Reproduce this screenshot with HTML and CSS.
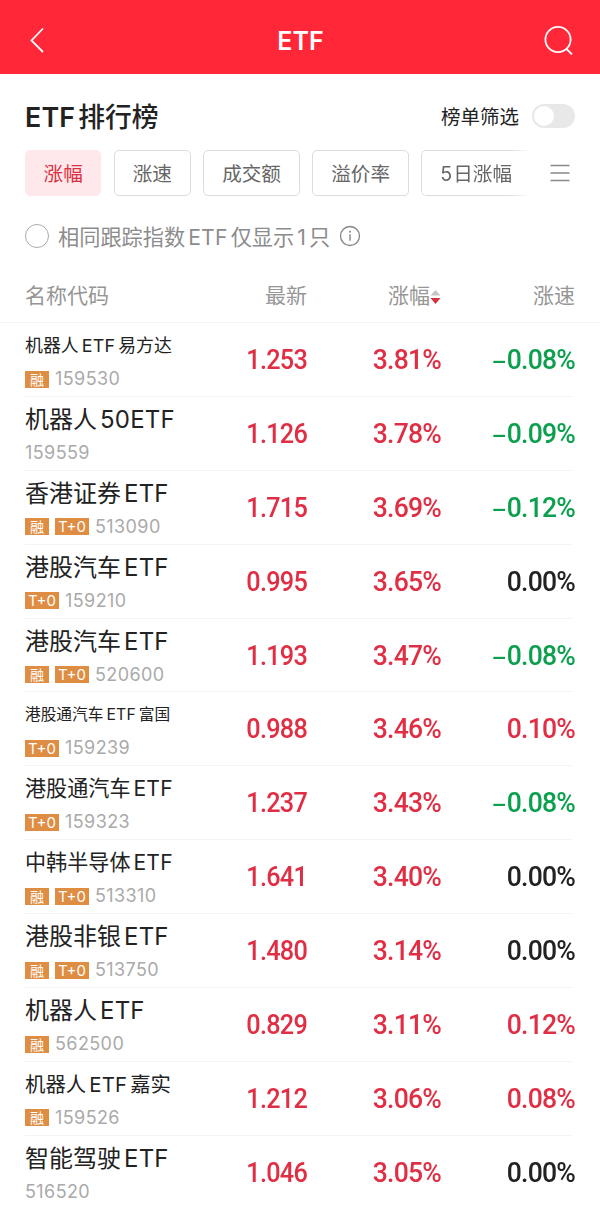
FILE: index.html
```html
<!DOCTYPE html>
<html lang="zh-CN">

<head>
    <meta charset="UTF-8">
    <meta name="viewport" content="width=device-width, initial-scale=1.0">
    <title>ETF排行榜</title>
    <link rel="stylesheet" href="styles.css">
</head>

<body>
    <header class="nav">
        <svg class="back" width="18" height="28" viewBox="0 0 18 28">
            <path d="M15 1.5L3.5 13.5L15 25" fill="none" stroke="#fff" stroke-width="1.8" />
        </svg>
        <h1>ETF</h1>
        <svg class="search" width="32" height="32" viewBox="0 0 32 32">
            <circle cx="15" cy="14.5" r="12.6" fill="none" stroke="#fff" stroke-width="1.8" />
            <path d="M23.5 24L29 29.3" fill="none" stroke="#fff" stroke-width="1.8" />
        </svg>
    </header>

    <div class="title">
        <h2><span class="en">ETF</span>排行榜</h2>
        <div class="filter">
            <span>榜单筛选</span>
            <div class="switch"></div>
        </div>
    </div>

    <div class="tabs">
        <div class="tab-list">
            <div class="tab active">涨幅</div>
            <div class="tab">涨速</div>
            <div class="tab">成交额</div>
            <div class="tab">溢价率</div>
            <div class="tab last"><span class="five">5</span>日涨幅</div>
        </div>
        <svg class="menu" width="20" height="18" viewBox="0 0 20 18">
            <path d="M0.5 1.5H19.5M0.5 9H19.5M0.5 16.5H19.5" fill="none" stroke="#888" stroke-width="1.3" />
        </svg>
    </div>

    <div class="only">
        <div class="radio"></div>
        <p>相同跟踪指数<span class="en">ETF</span>仅显示<span class="en">1</span>只</p>
        <svg width="22" height="22" viewBox="0 0 22 22">
            <circle cx="11" cy="11" r="9.5" fill="none" stroke="#858585" stroke-width="1.3" />
            <circle cx="11" cy="6.8" r="1" fill="#858585" />
            <path d="M11 9.3V15.8" stroke="#858585" stroke-width="1.4" />
        </svg>
    </div>

    <div class="head">
        <div class="hname">名称代码</div>
        <div>最新</div>
        <div class="sort">涨幅<svg width="11" height="16" viewBox="0 0 11 16">
                <path d="M0.5 6.5L5.5 1L10.5 6.5Z" fill="#c9c3c6" />
                <path d="M0.5 9L5.5 15L10.5 9Z" fill="#d5303e" />
            </svg></div>
        <div>涨速</div>
    </div>

    <div class="list">
        <div class="row">
            <div class="info">
                <div class="name s">机器人<span class="en">ETF</span>易方达</div>
                <div class="code"><i class="rong">融</i>159530</div>
            </div>
            <div class="num price up">1.253</div>
            <div class="num up">3.81%</div>
            <div class="num down"><span class="minus">−</span>0.08%</div>
        </div>
        <div class="row">
            <div class="info">
                <div class="name l">机器人<span class="en">50ETF</span></div>
                <div class="code">159559</div>
            </div>
            <div class="num price up">1.126</div>
            <div class="num up">3.78%</div>
            <div class="num down"><span class="minus">−</span>0.09%</div>
        </div>
        <div class="row">
            <div class="info">
                <div class="name l">香港证券<span class="en">ETF</span></div>
                <div class="code"><i class="rong">融</i><i>T+0</i>513090</div>
            </div>
            <div class="num price up">1.715</div>
            <div class="num up">3.69%</div>
            <div class="num down"><span class="minus">−</span>0.12%</div>
        </div>
        <div class="row">
            <div class="info">
                <div class="name l">港股汽车<span class="en">ETF</span></div>
                <div class="code"><i>T+0</i>159210</div>
            </div>
            <div class="num price up">0.995</div>
            <div class="num up">3.65%</div>
            <div class="num">0.00%</div>
        </div>
        <div class="row">
            <div class="info">
                <div class="name l">港股汽车<span class="en">ETF</span></div>
                <div class="code"><i class="rong">融</i><i>T+0</i>520600</div>
            </div>
            <div class="num price up">1.193</div>
            <div class="num up">3.47%</div>
            <div class="num down"><span class="minus">−</span>0.08%</div>
        </div>
        <div class="row">
            <div class="info">
                <div class="name xs">港股通汽车<span class="en">ETF</span>富国</div>
                <div class="code"><i>T+0</i>159239</div>
            </div>
            <div class="num price up">0.988</div>
            <div class="num up">3.46%</div>
            <div class="num up">0.10%</div>
        </div>
        <div class="row">
            <div class="info">
                <div class="name m">港股通汽车<span class="en">ETF</span></div>
                <div class="code"><i>T+0</i>159323</div>
            </div>
            <div class="num price up">1.237</div>
            <div class="num up">3.43%</div>
            <div class="num down"><span class="minus">−</span>0.08%</div>
        </div>
        <div class="row">
            <div class="info">
                <div class="name m">中韩半导体<span class="en">ETF</span></div>
                <div class="code"><i class="rong">融</i><i>T+0</i>513310</div>
            </div>
            <div class="num price up">1.641</div>
            <div class="num up">3.40%</div>
            <div class="num">0.00%</div>
        </div>
        <div class="row">
            <div class="info">
                <div class="name l">港股非银<span class="en">ETF</span></div>
                <div class="code"><i class="rong">融</i><i>T+0</i>513750</div>
            </div>
            <div class="num price up">1.480</div>
            <div class="num up">3.14%</div>
            <div class="num">0.00%</div>
        </div>
        <div class="row">
            <div class="info">
                <div class="name l">机器人<span class="en">ETF</span></div>
                <div class="code"><i class="rong">融</i>562500</div>
            </div>
            <div class="num price up">0.829</div>
            <div class="num up">3.11%</div>
            <div class="num up">0.12%</div>
        </div>
        <div class="row">
            <div class="info">
                <div class="name ms">机器人<span class="en">ETF</span>嘉实</div>
                <div class="code"><i class="rong">融</i>159526</div>
            </div>
            <div class="num price up">1.212</div>
            <div class="num up">3.06%</div>
            <div class="num up">0.08%</div>
        </div>
        <div class="row">
            <div class="info">
                <div class="name l">智能驾驶<span class="en">ETF</span></div>
                <div class="code">516520</div>
            </div>
            <div class="num price up">1.046</div>
            <div class="num up">3.05%</div>
            <div class="num">0.00%</div>
        </div>
    </div>
</body>

</html>
```
FILE: styles.css
```css
* {
    box-sizing: border-box;
}

body {
    margin: 0;
    height: 1208px;
    overflow: hidden;
    background-color: #fff;
    color: #222;
    font-family: "Noto Sans CJK SC", sans-serif;
}

h1,
h2,
p {
    margin: 0;
}

.en {
    font-family: Inter, sans-serif;
    margin: 0 3px;
    letter-spacing: 0.2px;
}

.nav {
    height: 74px;
    padding: 8px 25px 0 28px;
    display: flex;
    align-items: center;
    justify-content: space-between;
    background-color: #ff2738;
    color: #fff;
}

.nav h1 {
    font: 600 25px/30px Inter, sans-serif;
    padding-left: 12px;
}

.title {
    height: 76px;
    padding: 8px 25px 0;
    display: flex;
    align-items: center;
    justify-content: space-between;
}

.title h2 {
    font-size: 26.8px;
    font-weight: 500;
    line-height: 36px;
}

.title h2 .en {
    margin-left: 0;
    font-weight: 600;
}

.filter {
    display: flex;
    align-items: center;
    gap: 13px;
    font-size: 19.5px;
}

.filter span {
    padding-bottom: 2px;
}

.switch {
    width: 43px;
    height: 24px;
    padding: 2px;
    border-radius: 12px;
    background-color: #e8e8e8;
}

.switch::before {
    content: "";
    display: block;
    width: 20px;
    height: 20px;
    border-radius: 50%;
    background-color: #fff;
}

.tabs {
    height: 46px;
    padding: 0 30px 0 25px;
    display: flex;
    align-items: center;
    justify-content: space-between;
}

.tab-list {
    display: flex;
    gap: 12.3px;
}

.tab {
    height: 46px;
    padding: 0 18px;
    border: 1px solid #dcdcdc;
    border-radius: 5px;
    font-size: 19.6px;
    line-height: 44px;
    color: #666;
    white-space: nowrap;
}

.tab.active {
    padding: 0 17.6px;
    border-color: #ffe8eb;
    background-color: #ffe8eb;
    color: #dc3042;
}

.tab.last {
    width: 110px;
    border-right: 0;
    -webkit-mask-image: linear-gradient(to right, #000 80%, transparent);
    mask-image: linear-gradient(to right, #000 80%, transparent);
}

.five {
    font-family: Inter, sans-serif;
    margin-right: 1px;
}

.only {
    height: 80px;
    padding: 0 25px;
    display: flex;
    align-items: center;
    color: #8c8c8c;
    font-size: 21.2px;
}

.only p {
    padding-bottom: 2px;
}

.radio {
    width: 24px;
    height: 24px;
    margin-right: 9px;
    border: 1.5px solid #aaa;
    border-radius: 50%;
}

.only svg {
    margin-left: 9px;
}

.head,
.row {
    display: grid;
    grid-template-columns: 175px 107px 134px 134px;
    padding: 0 25px;
    text-align: right;
}

.head {
    height: 47px;
    padding-bottom: 10px;
    border-bottom: 1px solid #f3f3f3;
    align-items: center;
    font-size: 21px;
    line-height: 36px;
    color: #969696;
}

.hname {
    text-align: left;
}

.sort svg {
    vertical-align: -2px;
}

.row {
    height: 73.9px;
    background: linear-gradient(#f4f4f4, #f4f4f4) 25px 100% / 547px 1px no-repeat;
}

.info {
    text-align: left;
    white-space: nowrap;
}

.name {
    height: 45px;
    line-height: 43px;
}

.l {
    font-size: 24px;
    line-height: 41px;
}

.m {
    font-size: 21.1px;
}

.ms {
    font-size: 20.4px;
}

.s {
    font-size: 17.9px;
}

.xs {
    font-size: 15.7px;
}

.code {
    height: 22px;
    display: flex;
    align-items: center;
    font: 18px/22px Inter, sans-serif;
    letter-spacing: 0.4px;
    color: #aaa;
}

.code i {
    width: 34px;
    height: 17px;
    margin-right: 6px;
    background-color: #de8d43;
    color: #fff;
    font: 15px/17px Inter, sans-serif;
    letter-spacing: 0;
    text-align: center;
}

.code .rong {
    width: 24px;
    font: 14px/16px "Noto Sans CJK SC", sans-serif;
}

.num {
    font: 500 27px/75px Roboto, sans-serif;
    letter-spacing: -0.8px;
    transform: scaleX(0.982);
    transform-origin: right;
}

.price {
    transform: scaleX(0.935);
}

.minus {
    font: 400 26px Inter, sans-serif;
}

.up {
    color: #e02f44;
}

.down {
    color: #0ba04d;
}
```
